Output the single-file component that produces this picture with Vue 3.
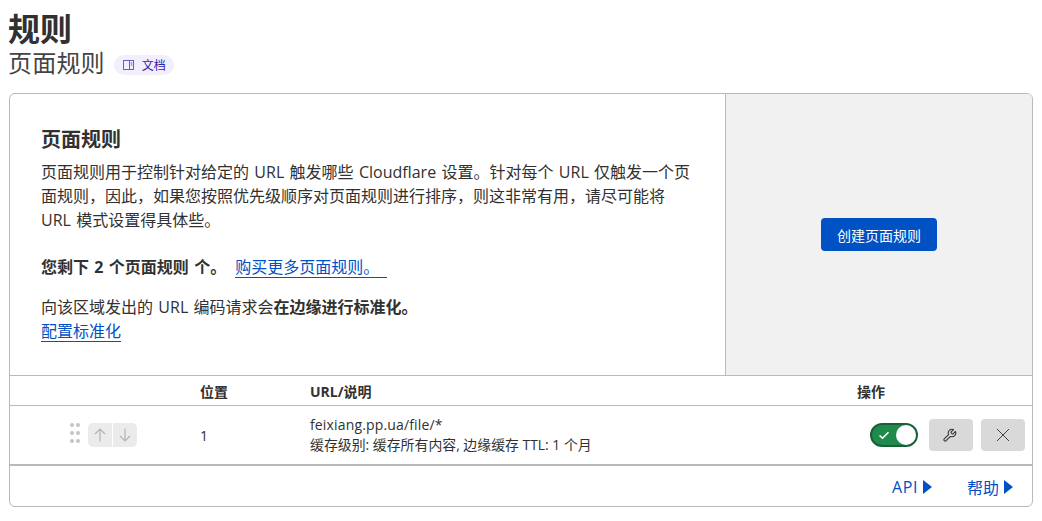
<template>
  <div class="page">
    <h1 class="title">规则</h1>
    <div class="subtitle-row">
      <span class="subtitle">页面规则</span>
      <a class="doc-badge">
        <svg class="doc-icon" viewBox="0 0 11 10" width="11" height="10" fill="none" stroke="#6a5bd0" stroke-width="1">
          <rect x="0.5" y="0.5" width="10" height="9" />
          <path d="M6.5 .5v9M7.8 3h1.6M7.8 5h1.6" />
        </svg>
        <span>文档</span>
      </a>
    </div>
    <section class="card">
      <div class="intro">
        <div class="intro-text">
          <h2>页面规则</h2>
          <p class="desc">页面规则用于控制针对给定的 URL 触发哪些 Cloudflare 设置。针对每个 URL 仅触发一个页面规则，因此，如果您按照优先级顺序对页面规则进行排序，则这非常有用，请尽可能将 URL 模式设置得具体些。</p>
          <p class="remain"><b>您剩下 2 个页面规则 个。</b><a class="link buy">购买更多页面规则。</a></p>
          <p class="norm">向该区域发出的 URL 编码请求会<b>在边缘进行标准化。</b><br /><a class="link">配置标准化</a></p>
        </div>
        <div class="intro-action">
          <button class="primary">创建页面规则</button>
        </div>
      </div>
      <div class="thead">
        <span class="c-handle"></span>
        <span class="c-pos">位置</span>
        <span class="c-url">URL/说明</span>
        <span class="c-act">操作</span>
      </div>
      <div class="trow">
        <div class="c-handle handle">
          <div class="dots"><i v-for="n in 6" :key="n"></i></div>
          <div class="arrows">
            <span class="arrow">
              <svg viewBox="0 0 16 16" width="16" height="16" fill="none" stroke="#b4b4b4" stroke-width="1.2"><path d="M8 14.5V2M3 7l5-5 5 5" /></svg>
            </span>
            <span class="arrow">
              <svg viewBox="0 0 16 16" width="16" height="16" fill="none" stroke="#b4b4b4" stroke-width="1.2"><path d="M8 1.5V14M3 9l5 5 5-5" /></svg>
            </span>
          </div>
        </div>
        <div class="c-pos pos">1</div>
        <div class="c-url">
          <div class="url">feixiang.pp.ua/file/*</div>
          <div class="note">缓存级别: 缓存所有内容, 边缘缓存 TTL: 1 个月</div>
        </div>
        <div class="actions">
          <span class="toggle">
            <svg viewBox="0 0 12 12" width="12" height="12" fill="none" stroke="#fff" stroke-width="1.6"><path d="M1.5 6.5 4.5 9.2 10.5 3.2" /></svg>
            <i class="knob"></i>
          </span>
          <button class="icon-btn">
            <svg class="wrench" viewBox="0 0 24 24" width="15" height="15" fill="none" stroke="#333" stroke-width="1.7" stroke-linejoin="round"><path d="M14.7 6.3a1 1 0 0 0 0 1.4l1.6 1.6a1 1 0 0 0 1.4 0l3.77-3.77a6 6 0 0 1-7.94 7.94l-6.91 6.91a2.12 2.12 0 0 1-3-3l6.91-6.91a6 6 0 0 1 7.94-7.94l-3.76 3.76z" /></svg>
          </button>
          <button class="icon-btn">
            <svg viewBox="0 0 16 16" width="16" height="16" fill="none" stroke="#444" stroke-width="1"><path d="M2 2l12 12M14 2 2 14" /></svg>
          </button>
        </div>
      </div>
      <div class="tfoot">
        <a class="foot-link api">API<i class="tri"></i></a>
        <a class="foot-link">帮助<i class="tri"></i></a>
      </div>
    </section>
  </div>
</template>

<script setup>
</script>

<style>
html, body { margin: 0; background: #fff; }
</style>

<style scoped>
.page {
  width: 1042px;
  height: 521px;
  box-sizing: border-box;
  padding: 9px 9px 0;
  overflow: hidden;
  color: #313131;
  font-family: "Open Sans", "Noto Sans CJK SC", sans-serif;
}
.title {
  margin: 0;
  font-size: 32px;
  line-height: 40px;
  font-weight: 700;
  margin-left: -1px;
}
.subtitle-row {
  display: flex;
  align-items: center;
  height: 28px;
  margin-left: -1px;
}
.subtitle { font-size: 24px; line-height: 28px; color: #444; letter-spacing: .2px; }
.doc-badge {
  display: flex;
  align-items: center;
  gap: 8px;
  margin-left: 9px;
  margin-top: 4px;
  height: 20px;
  width: 60px;
  box-sizing: border-box;
  padding-left: 9px;
  border-radius: 10px;
  background: #f2eefc;
  color: #2d1fa8;
  font-size: 12px;
}
.card {
  margin-top: 16px;
  width: 1024px;
  height: 414px;
  box-sizing: border-box;
  border: 1px solid #b9b9b9;
  border-radius: 6px;
  overflow: hidden;
}
.intro { display: flex; height: 281px; border-bottom: 1px solid #b9b9b9; }
.intro-text { width: 716px; box-sizing: border-box; padding: 32px 32px 0 32px; border-right: 1px solid #b9b9b9; }
h2 { margin: 0 0 6px; font-size: 20px; line-height: 28px; font-weight: 700; margin-left: -1px; }
.desc, .remain, .norm { margin: 0 0 0 -1px; font-size: 16px; line-height: 24px; word-spacing: 1.2px; }
.desc { width: 653px; }
.remain { margin-top: 23px; }
.norm { margin-top: 16px; }
.link { color: #0051c3; text-decoration: none; display: inline-block; line-height: 20px; border-bottom: 1px solid #0051c3; }
.buy { margin-left: 9px; padding-right: 8px; }
.intro-action { flex: 1; background: #f1f1f1; display: flex; align-items: center; justify-content: center; }
.primary {
  width: 116px;
  height: 33px;
  border: none;
  border-radius: 4px;
  background: #0051c3;
  color: #fff;
  font: inherit;
  font-size: 14px;
  padding: 0;
}
.thead, .trow { display: flex; align-items: center; }
.thead { height: 29px; border-bottom: 1px solid #b9b9b9; font-size: 14px; font-weight: 700; }
.c-handle { width: 190px; flex: none; }
.c-pos { width: 110px; flex: none; }
.c-url { flex: 1; }
.c-act { width: 175px; flex: none; }
.trow { height: 58px; border-bottom: 2px solid #b9b9b9; }
.handle { display: flex; align-items: center; padding-left: 60px; box-sizing: border-box; gap: 8px; }
.dots { display: grid; grid-template-columns: 4px 4px; gap: 4px 2px; margin-top: -4px; }
.dots i { width: 4px; height: 4px; border-radius: 50%; background: #c4c4c4; }
.arrows { display: flex; gap: 1px; border-radius: 5px; overflow: hidden; }
.arrow { width: 24px; height: 24px; background: #ebebeb; display: flex; align-items: center; justify-content: center; }
.pos { font-size: 14px; }
.url { font-size: 14px; line-height: 20px; letter-spacing: .15px; }
.note { font-size: 13.9px; line-height: 20px; }
.actions { display: flex; align-items: center; padding-right: 7px; }
.toggle {
  width: 48px;
  height: 24px;
  box-sizing: border-box;
  border: 2px solid #1b5e3a;
  border-radius: 12px;
  background: #1f8a4c;
  display: flex;
  align-items: center;
  position: relative;
  padding-left: 6px;
  margin-right: 11px;
}
.knob { position: absolute; right: 0; top: 0; width: 20px; height: 20px; border-radius: 50%; background: #fff; }
.icon-btn {
  width: 44px;
  height: 32px;
  border: none;
  border-radius: 4px;
  background: #d9d9d9;
  display: flex;
  align-items: center;
  justify-content: center;
  margin-left: 8px;
  padding: 0;
}
.icon-btn:first-of-type { margin-left: 0; }
.wrench { margin-right: 4px; }
.tfoot { height: 41px; display: flex; justify-content: flex-end; align-items: center; gap: 35px; padding-right: 19px; font-size: 16px; }
.foot-link { color: #0051c3; display: flex; align-items: center; gap: 5px; }
.api { letter-spacing: .6px; }
.tri { width: 0; height: 0; border-left: 9px solid #0051c3; border-top: 7px solid transparent; border-bottom: 7px solid transparent; }
</style>
